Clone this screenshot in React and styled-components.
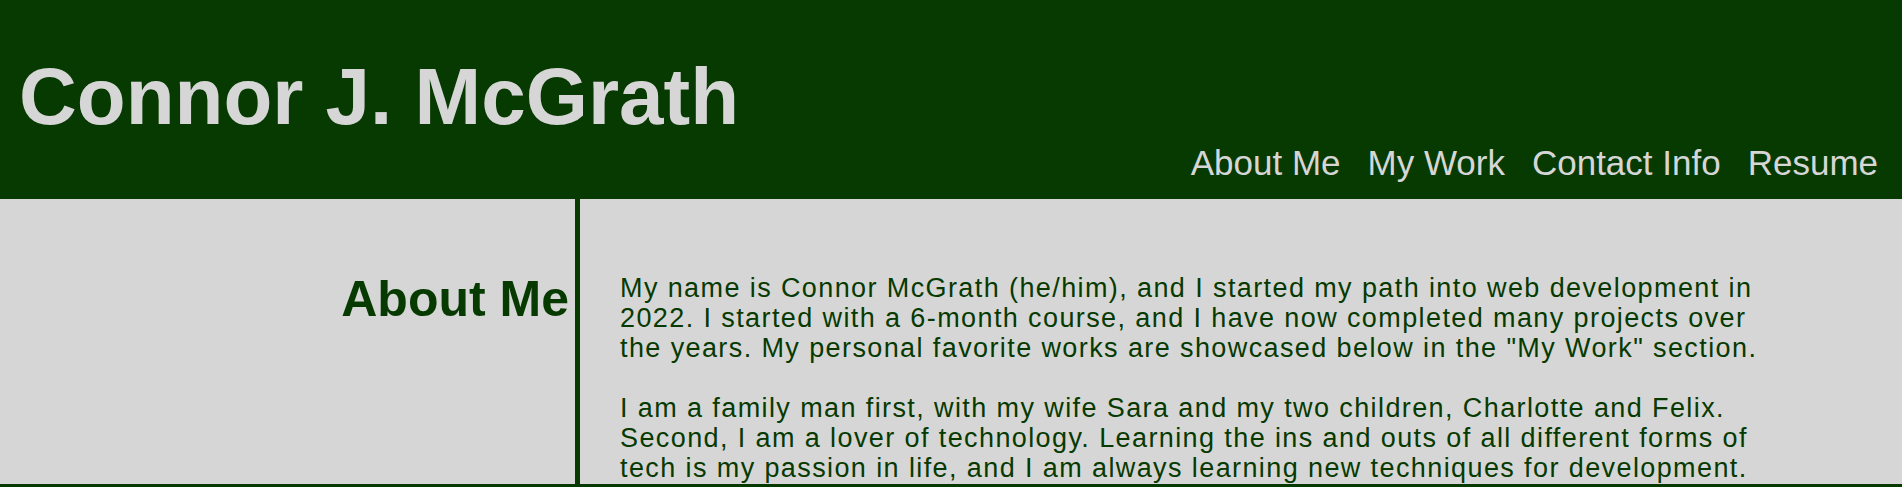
import React from 'react';
import styled, { createGlobalStyle } from 'styled-components';

const GlobalStyle = createGlobalStyle`
  body {
    margin: 0;
    background-color: #d6d6d6;
    font-family: "Liberation Sans", Arial, sans-serif;
  }
`;

const Header = styled.header`
  display: flex;
  flex-direction: column;
  background-color: #063a00;
  padding: 51px 24px 15px 19px;
  height: 199px;
  box-sizing: border-box;
`;

const Name = styled.h1`
  margin: 0;
  font-size: 80px;
  font-weight: bold;
  color: #d6d6d6;
`;

const Nav = styled.nav`
  display: flex;
  justify-content: flex-end;
  gap: 27px;
`;

const NavLink = styled.a`
  font-size: 35px;
  color: #d6d6d6;
  text-decoration: none;
  cursor: pointer;
`;

const Section = styled.section`
  display: grid;
  grid-template-columns: 575px 1fr;
  height: 285px;
  overflow: hidden;
  border-bottom: 5px solid #063a00;
`;

const SectionTitle = styled.h2`
  margin: 71px 0 0;
  padding-right: 6px;
  text-align: right;
  font-size: 50px;
  font-weight: bold;
  color: #063a00;
`;

const SectionBody = styled.div`
  border-left: 5px solid #063a00;
  padding: 74px 0 0 40px;
`;

const Text = styled.p`
  margin: 0;
  max-width: 1150px;
  font-size: 27px;
  line-height: 30px;
  letter-spacing: 1.4px;
  color: #063a00;
`;

const links = ['About Me', 'My Work', 'Contact Info', 'Resume'];

const App = () => {
  return (
    <>
      <GlobalStyle />
      <Header>
        <Name>Connor J. McGrath</Name>
        <Nav>
          {links.map((link) => (
            <NavLink key={link}>{link}</NavLink>
          ))}
        </Nav>
      </Header>
      <Section>
        <SectionTitle>About Me</SectionTitle>
        <SectionBody>
          <Text>
            My name is Connor McGrath (he/him), and I started my path into web development in 2022. I started
            with a 6-month course, and I have now completed many projects over the years. My personal favorite
            works are showcased below in the "My Work" section.
            <br />
            <br />
            I am a family man first, with my wife Sara and my two children, Charlotte and Felix. Second, I am a
            lover of technology. Learning the ins and outs of all different forms of tech is my passion in life,
            and I am always learning new techniques for development.
          </Text>
        </SectionBody>
      </Section>
    </>
  );
};

export default App;
